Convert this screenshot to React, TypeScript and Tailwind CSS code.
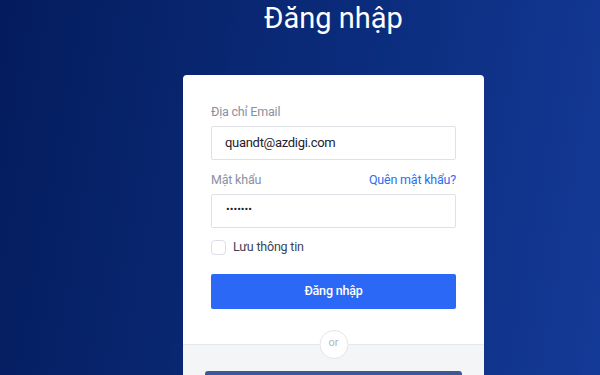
export default function App() {
  return (
    <div className="h-[375px] w-full overflow-hidden bg-[linear-gradient(100deg,#041c5d_0%,#0b2c7c_55%,#143a97_100%)] font-['Roboto',sans-serif]">
      <div className="flex flex-col items-center pl-[67px]">
        <h1 className="text-[29px] leading-[36px] font-normal text-white">Đăng nhập</h1>

        <div className="mt-[39px] w-[301px] rounded-[4px] bg-white">
          <div className="px-[28px] pt-[27px] pb-[35px]">
            <label className="block text-[12.5px] leading-[20px] tracking-[-0.2px] text-[#8a90a2]">Địa chỉ Email</label>
            <div className="mt-[4px] flex h-[34px] items-center rounded-[2px] border border-[#dfe1e6] pl-[13px] text-[13px] tracking-[-0.3px] text-[#1c2230]">
              quandt@azdigi.com
            </div>

            <div className="mt-[10px] flex items-center justify-between text-[12.5px] leading-[20px] tracking-[-0.2px]">
              <span className="text-[#8a90a2]">Mật khẩu</span>
              <a className="text-[#2f6cf0]" href="#">Quên mật khẩu?</a>
            </div>
            <div className="mt-[4px] flex h-[34px] items-center rounded-[2px] border border-[#dfe1e6] pl-[14px] pb-[2px] text-[11px] text-[#1c2230]">
              •••••••
            </div>

            <div className="mt-[9px] flex h-[20px] items-center gap-[7px]">
              <span className="h-[15px] w-[15px] rounded-[4px] border border-[#dcdfe6] bg-white" />
              <span className="text-[12.5px] tracking-[-0.2px] text-[#3c4257]">Lưu thông tin</span>
            </div>

            <button className="mt-[17px] flex h-[35px] w-full items-center justify-center rounded-[2px] bg-[#2b68f6] text-[12.5px] tracking-[-0.2px] font-medium text-white">
              Đăng nhập
            </button>
          </div>

          <div className="relative border-t border-[#e6e8ec] bg-[#f4f5f7] px-[22px] pt-[26px]">
            <span className="absolute left-1/2 top-[-15px] flex h-[29px] w-[29px] -translate-x-1/2 items-center justify-center rounded-full border border-[#e3e5ea] bg-white pb-[2px] text-[11px] text-[#b0b5c3]">
              or
            </span>
            <div className="h-[30px] rounded-t-[3px] bg-[#3b5998]" />
          </div>
        </div>
      </div>
    </div>
  );
}
